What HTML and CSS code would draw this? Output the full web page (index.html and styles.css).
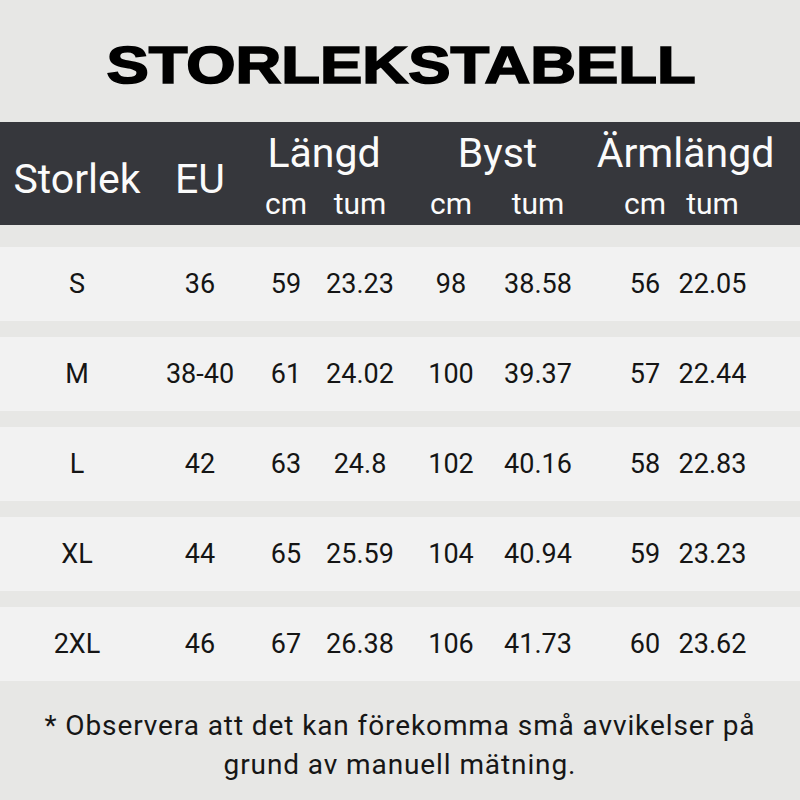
FILE: index.html
```html
<!DOCTYPE html>
<html lang="sv">
<head>
<meta charset="utf-8">
<title>Storlekstabell</title>
<link rel="stylesheet" href="styles.css">
</head>
<body>
<div class="page">
  <div class="title-wrap"><h1 class="title">STORLEKSTABELL</h1></div>

  <div class="thead grid">
    <div class="cell h-main span2 c1">Storlek</div>
    <div class="cell h-main span2 c2">EU</div>
    <div class="cell h-group g-langd">Längd</div>
    <div class="cell h-group g-byst">Byst</div>
    <div class="cell h-group g-arm">Ärmlängd</div>
    <div class="cell h-sub c3">cm</div>
    <div class="cell h-sub c4">tum</div>
    <div class="cell h-sub c5">cm</div>
    <div class="cell h-sub c6">tum</div>
    <div class="cell h-sub c7">cm</div>
    <div class="cell h-sub c8">tum</div>
  </div>

  <div class="tbody">
    <div class="row grid">
      <div class="cell">S</div><div class="cell">36</div><div class="cell">59</div><div class="cell">23.23</div><div class="cell">98</div><div class="cell">38.58</div><div class="cell">56</div><div class="cell">22.05</div>
    </div>
    <div class="row grid">
      <div class="cell">M</div><div class="cell">38-40</div><div class="cell">61</div><div class="cell">24.02</div><div class="cell">100</div><div class="cell">39.37</div><div class="cell">57</div><div class="cell">22.44</div>
    </div>
    <div class="row grid">
      <div class="cell">L</div><div class="cell">42</div><div class="cell">63</div><div class="cell">24.8</div><div class="cell">102</div><div class="cell">40.16</div><div class="cell">58</div><div class="cell">22.83</div>
    </div>
    <div class="row grid">
      <div class="cell">XL</div><div class="cell">44</div><div class="cell">65</div><div class="cell">25.59</div><div class="cell">104</div><div class="cell">40.94</div><div class="cell">59</div><div class="cell">23.23</div>
    </div>
    <div class="row grid">
      <div class="cell">2XL</div><div class="cell">46</div><div class="cell">67</div><div class="cell">26.38</div><div class="cell">106</div><div class="cell">41.73</div><div class="cell">60</div><div class="cell">23.62</div>
    </div>
  </div>

  <p class="note">* Observera att det kan förekomma små avvikelser på<br>grund av manuell mätning.</p>
</div>
</body>
</html>
```

FILE: styles.css
```css
* { box-sizing: border-box; }

html, body {
  margin: 0;
  padding: 0;
  background: #e7e7e5;
}

body {
  font-family: Roboto, "Noto Sans", sans-serif;
  color: #151515;
}

.page {
  width: 800px;
  height: 800px;
  overflow: hidden;
  display: flex;
  flex-direction: column;
}

.title-wrap {
  height: 122px;
  padding-top: 40px;
  display: flex;
  justify-content: center;
  align-items: flex-start;
}

.title {
  margin: 0;
  font-family: "Liberation Sans", Arial, sans-serif;
  font-weight: 700;
  font-size: 51px;
  line-height: 51px;
  color: #000;
  -webkit-text-stroke: 1.6px #000;
  transform: scaleX(1.243);
  transform-origin: center;
  white-space: nowrap;
  margin-left: 2px;
}

.grid {
  display: grid;
  grid-template-columns: 114px 132px 40px 108px 74px 100px 114px 21px;
  padding-left: 20px;
}

.cell {
  display: flex;
  justify-content: center;
  align-items: center;
  white-space: nowrap;
}

/* header */
.thead {
  height: 103px;
  background: #36373c;
  color: #fbfbfb;
  padding-top: 11px;
  grid-template-rows: 40px 30px;
  row-gap: 16px;
}

.h-main {
  font-size: 41px;
  line-height: 40px;
  grid-row: 1 / 3;
  padding-top: 5px;
}
.c1 { grid-column: 1; }
.c2 { grid-column: 2; }
.c3 { grid-column: 3; }
.c4 { grid-column: 4; }
.c5 { grid-column: 5; }
.c6 { grid-column: 6; }
.c7 { grid-column: 7; }
.c8 { grid-column: 8; }

.h-group {
  font-size: 41px;
  line-height: 40px;
  grid-row: 1;
}
.g-langd { grid-column: 3 / 5; padding-right: 32px; }
.g-byst  { grid-column: 5 / 7; padding-right: 7px; }
.g-arm   { grid-column: 7 / 9; padding-left: 60px; }

.h-sub {
  grid-row: 2;
  font-size: 30px;
  line-height: 30px;
}

/* body */
.tbody {
  padding-top: 22px;
  display: flex;
  flex-direction: column;
  gap: 16px;
}

.row {
  height: 74px;
  background: #f2f2f2;
  font-size: 27px;
  line-height: 27px;
  color: #151515;
}

/* footer */
.note {
  margin: 0;
  padding-top: 25px;
  text-align: center;
  font-size: 28px;
  line-height: 39px;
  letter-spacing: 0.9px;
  color: #161616;
}
```
